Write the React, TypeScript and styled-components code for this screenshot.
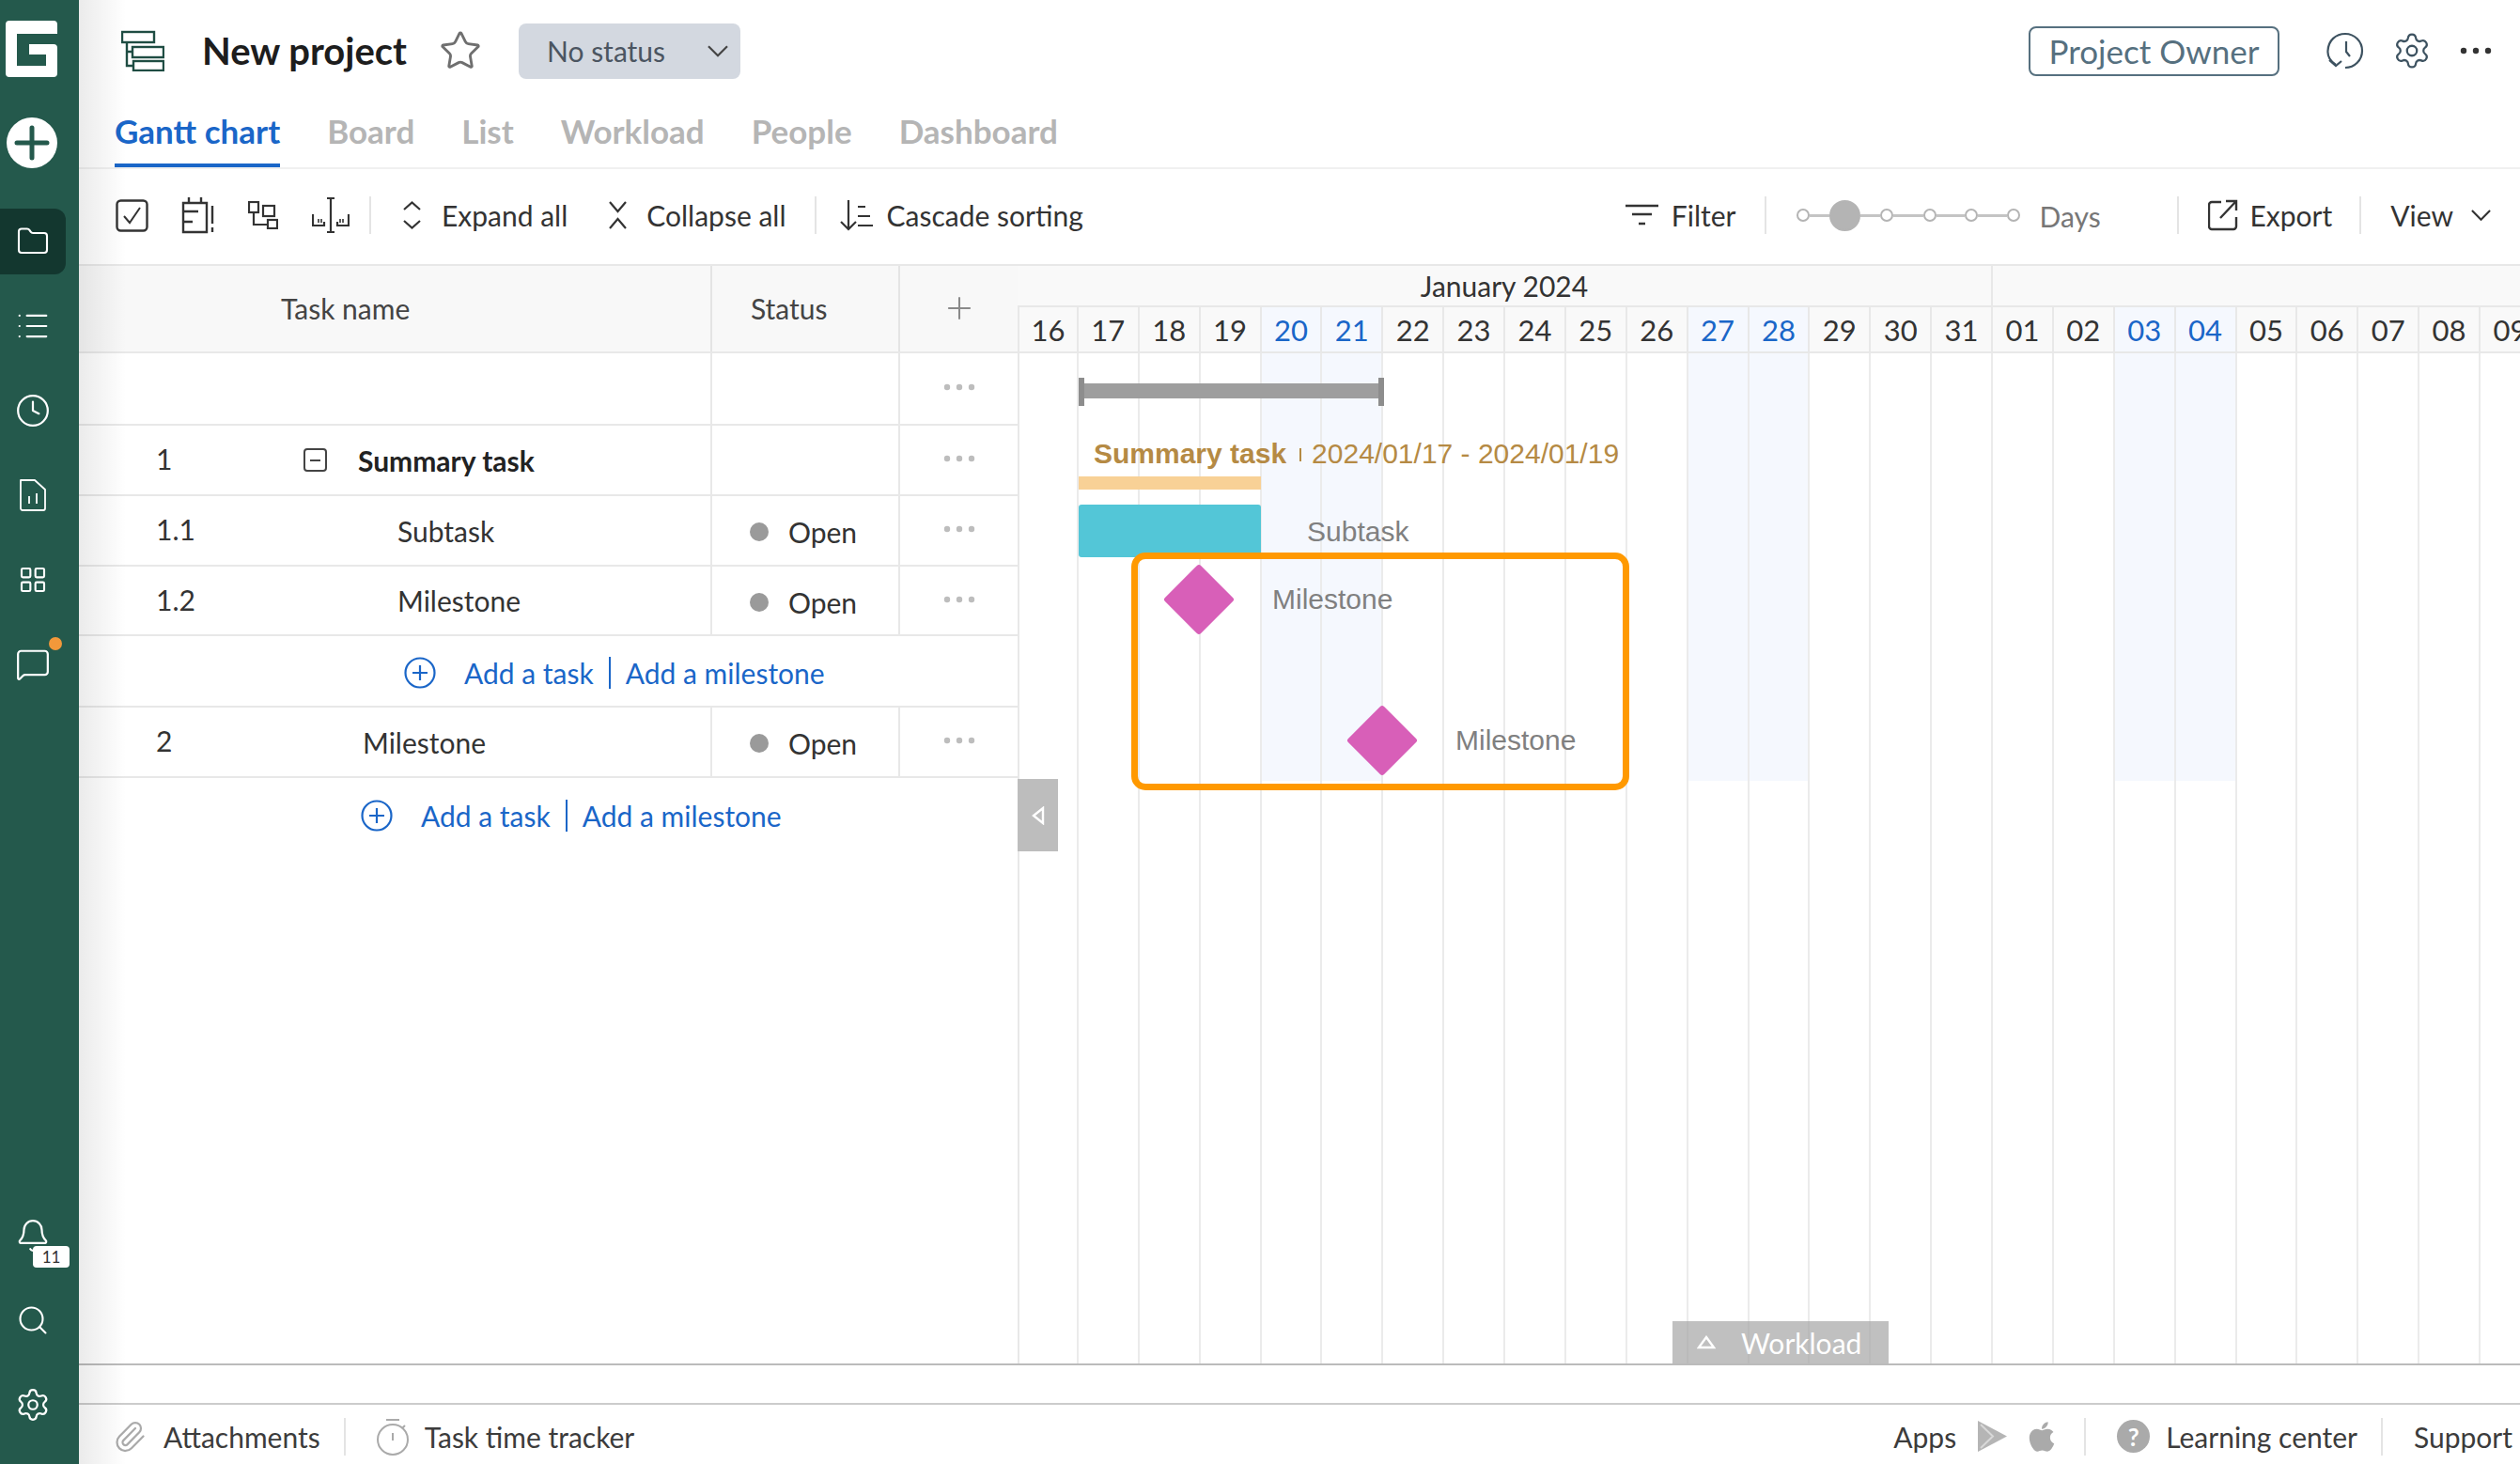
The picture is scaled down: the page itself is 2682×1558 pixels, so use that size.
import React from 'react'
import styled, { createGlobalStyle } from 'styled-components'
import { Bell, Clock, Folder, LayoutGrid, List as ListIcon, MessageSquare, Paperclip, Plus, Search, Settings, Star } from 'lucide-react'
import { FaApple } from 'react-icons/fa'

const Global = createGlobalStyle`
  html, body {
    margin: 0;
    height: 100%;
    overflow: hidden;
    background: #fff;
  }
  body {
    font-family: Lato, "Open Sans", sans-serif;
    color: #333;
  }
`

const Page = styled.div`
  display: flex;
  width: 2682px;
  height: 1558px;
`

const Sidebar = styled.nav`
  flex: 0 0 84px;
  display: flex;
  flex-direction: column;
  padding: 22px 14px 18px 0;
  box-sizing: border-box;
  background: #24594c;
  color: #fff;
  position: relative;
  z-index: 6;
`

const Logo = styled.div`
  height: 60px;
  padding-left: 6px;
`

const AddButton = styled.div`
  height: 54px;
  margin-top: 43px;
  padding-left: 7px;
`

const ActiveItem = styled.div`
  height: 70px;
  margin: 43px 0 10px;
  display: flex;
  align-items: center;
  justify-content: center;
  background: #13372f;
  border-radius: 0 12px 12px 0;
`

const NavItem = styled.div`
  height: 90px;
  display: flex;
  align-items: center;
  justify-content: center;
  position: relative;
`

const NavSpacer = styled.div`
  flex: 1;
`

const OrangeDot = styled.span`
  position: absolute;
  left: 52px;
  top: 16px;
  width: 14px;
  height: 14px;
  border-radius: 50%;
  background: #f2983a;
`

const CountBadge = styled.span`
  position: absolute;
  left: 35px;
  top: 56px;
  width: 39px;
  height: 23px;
  border-radius: 4px;
  background: #fff;
  color: #333;
  font-size: 17px;
  line-height: 23px;
  text-align: center;
`

const Main = styled.main`
  flex: 1;
  min-width: 0;
  display: flex;
  flex-direction: column;
  position: relative;

  &::before {
    content: '';
    position: absolute;
    left: 0;
    top: 0;
    bottom: 0;
    width: 50px;
    background: linear-gradient(90deg, rgba(0, 0, 0, 0.08), rgba(0, 0, 0, 0));
    pointer-events: none;
    z-index: 5;
  }
`

const TitleRow = styled.header`
  height: 108px;
  display: flex;
  align-items: center;
  padding: 0 30px 0 45px;
`

const Title = styled.h1`
  margin: 0 0 0 40px;
  font-size: 40px;
  font-weight: 700;
  color: #1d1d1d;
`

const StarWrap = styled.span`
  margin-left: 34px;
  display: flex;
  color: #6f6f6f;
`

const StatusSelect = styled.div`
  margin-left: 39px;
  width: 236px;
  height: 59px;
  box-sizing: border-box;
  padding: 0 12px 0 30px;
  display: flex;
  align-items: center;
  justify-content: space-between;
  border-radius: 8px;
  background: #d3d8e0;
  color: #4b5561;
  font-size: 30px;
`

const OwnerTag = styled.div`
  margin-left: auto;
  width: 267px;
  height: 53px;
  box-sizing: border-box;
  display: flex;
  align-items: center;
  justify-content: center;
  border: 2px solid #56707f;
  border-radius: 8px;
  color: #56707f;
  font-size: 35px;
`

const HeadIcon = styled.span<{ $ml: number }>`
  margin-left: ${(p) => p.$ml}px;
  display: flex;
  color: #3d5260;
`

const Tabs = styled.div`
  height: 72px;
  box-sizing: border-box;
  display: flex;
  gap: 50px;
  padding-left: 38px;
  border-bottom: 2px solid #f0f0f0;
`

const Tab = styled.div<{ $active?: boolean }>`
  height: 100%;
  box-sizing: border-box;
  display: flex;
  align-items: center;
  padding-bottom: 5px;
  font-size: 35px;
  font-weight: 700;
  color: ${(p) => (p.$active ? '#1a66c8' : '#b5b5b5')};
  border-bottom: 4px solid ${(p) => (p.$active ? '#1a66c8' : 'transparent')};
`

const Toolbar = styled.div`
  height: 101px;
  flex: 0 0 101px;
  box-sizing: border-box;
  display: flex;
  align-items: center;
  padding: 0 30px 3px 39px;
  font-size: 30px;
  color: #333;
`

const ToolIcon = styled.span<{ $ml?: number }>`
  margin-left: ${(p) => p.$ml ?? 0}px;
  display: flex;
`

const ToolButton = styled.div<{ $ml?: number; $gap?: number }>`
  margin-left: ${(p) => p.$ml ?? 0}px;
  display: flex;
  align-items: center;
  gap: ${(p) => p.$gap ?? 20}px;
`

const Divider = styled.span<{ $ml?: number; $h?: number }>`
  flex: none;
  margin-left: ${(p) => p.$ml ?? 0}px;
  width: 2px;
  height: ${(p) => p.$h ?? 40}px;
  background: #e4e4e4;
`

const ToolRight = styled.div`
  margin-left: auto;
  display: flex;
  align-items: center;
`

const Zoom = styled.div`
  margin-left: 32px;
  display: flex;
  align-items: center;
`

const ZoomDot = styled.span<{ $active?: boolean }>`
  flex: none;
  box-sizing: border-box;
  width: ${(p) => (p.$active ? 33 : 14)}px;
  height: ${(p) => (p.$active ? 33 : 14)}px;
  border-radius: 50%;
  border: 2px solid #b4b4b4;
  background: ${(p) => (p.$active ? '#b4b4b4' : '#fff')};
`

const ZoomLine = styled.span<{ $w: number }>`
  flex: none;
  width: ${(p) => p.$w}px;
  height: 3px;
  background: #c4c4c4;
`

const ZoomLabel = styled.span`
  margin: 2px 0 0 20px;
  width: 85px;
  color: #777;
`

const Content = styled.div`
  flex: 1;
  min-height: 0;
  display: flex;
`

const TablePane = styled.section`
  flex: 0 0 999px;
`

const TableHead = styled.div`
  height: 95px;
  box-sizing: border-box;
  display: grid;
  grid-template-columns: 674px 200px 125px;
  border-top: 2px solid #e8e8e8;
  border-bottom: 2px solid #e8e8e8;
  background: #f8f8f8;
  font-size: 30px;
`

const HeadCell = styled.div<{ $pl?: number; $last?: boolean }>`
  display: flex;
  align-items: center;
  padding: 0 0 2px ${(p) => p.$pl ?? 0}px;
  border-right: ${(p) => (p.$last ? 'none' : '2px solid #e4e4e4')};
  justify-content: ${(p) => (p.$last ? 'center' : 'flex-start')};
  color: #444;
`

const Row = styled.div<{ $h: number }>`
  height: ${(p) => p.$h}px;
  box-sizing: border-box;
  display: grid;
  grid-template-columns: 674px 200px 125px;
  border-bottom: 2px solid #e8e8e8;
  font-size: 30px;
  color: #333;
`

const NameCell = styled.div`
  display: flex;
  align-items: center;
  padding-left: 82px;
  border-right: 2px solid #e8e8e8;
`

const Num = styled.span`
  flex: 0 0 157px;
  margin-top: -3px;
`

const TaskName = styled.span<{ $ml?: number; $bold?: boolean }>`
  margin-left: ${(p) => p.$ml ?? 0}px;
  font-weight: ${(p) => (p.$bold ? 700 : 400)};
  color: ${(p) => (p.$bold ? '#222' : '#333')};
`

const ToggleBox = styled.span`
  flex: none;
  width: 25px;
  height: 25px;
  box-sizing: border-box;
  margin-right: 33px;
  border: 2px solid #444;
  border-radius: 4px;
  display: flex;
  align-items: center;
  justify-content: center;

  &::after {
    content: '';
    width: 11px;
    height: 2px;
    background: #444;
  }
`

const StatusCell = styled.div`
  display: flex;
  align-items: center;
  gap: 21px;
  padding: 3px 0 0 40px;
  border-right: 2px solid #e8e8e8;
`

const StatusDot = styled.span`
  width: 20px;
  height: 20px;
  border-radius: 50%;
  background: #9a9a9a;
`

const MenuCell = styled.div`
  display: flex;
  align-items: center;
  justify-content: center;
  padding-bottom: 3px;
  color: #bdbdbd;
`

const AddRow = styled.div<{ $h: number; $pl: number; $pt?: number; $border?: boolean }>`
  height: ${(p) => p.$h}px;
  box-sizing: border-box;
  display: flex;
  align-items: center;
  padding: ${(p) => p.$pt ?? 0}px 0 0 ${(p) => p.$pl}px;
  border-bottom: ${(p) => (p.$border ? '2px solid #e8e8e8' : 'none')};
  font-size: 30px;
  color: #1a66c8;
`

const AddIcon = styled.span`
  display: flex;
  margin-right: 30px;
`

const AddSep = styled.span`
  width: 2px;
  height: 34px;
  margin: 0 16px;
  background: #1a66c8;
`

const GanttPane = styled.section`
  flex: 1;
  min-width: 0;
  display: flex;
  flex-direction: column;
  border-left: 0;
  overflow: hidden;
`

const MonthRow = styled.div`
  height: 46px;
  flex: none;
  box-sizing: border-box;
  display: flex;
  border-top: 2px solid #e8e8e8;
  border-bottom: 2px solid #e8e8e8;
  background: #f9f9f9;
  font-size: 30px;
`

const MonthCell = styled.div<{ $days: number }>`
  flex: 0 0 ${(p) => p.$days * 64.875}px;
  box-sizing: border-box;
  display: flex;
  align-items: center;
  justify-content: center;
  border-right: 2px solid #e8e8e8;
  color: #333;
`

const DayRow = styled.div`
  height: 49px;
  flex: none;
  box-sizing: border-box;
  display: flex;
  border-bottom: 2px solid #e8e8e8;
  background: #f9f9f9;
`

const DayCell = styled.div<{ $weekend?: boolean }>`
  flex: 0 0 64.875px;
  box-sizing: border-box;
  display: flex;
  align-items: center;
  justify-content: center;
  border-right: 2px solid #e8e8e8;
  font-size: 31px;
  color: ${(p) => (p.$weekend ? '#1a66c8' : '#333')};
  background: ${(p) => (p.$weekend ? '#f5f8fe' : 'transparent')};

  &:first-child {
    border-left: 2px solid #e8e8e8;
  }
`

const Canvas = styled.div`
  flex: 1;
  min-height: 0;
  display: flex;
  position: relative;
  border-left: 2px solid #e8e8e8;
  margin-right: -30px;
`

const Column = styled.div<{ $weekend?: boolean }>`
  flex: 0 0 64.875px;
  box-sizing: border-box;
  border-right: 2px solid #ebebeb;
  position: relative;
  margin-left: 0;

  &:first-child {
    flex-basis: 62.875px;
  }

  &::before {
    content: '';
    display: ${(p) => (p.$weekend ? 'block' : 'none')};
    position: absolute;
    left: 0;
    right: 0;
    top: 0;
    height: 455px;
    background: #f5f8fe;
  }
`

const SummaryRange = styled.div`
  position: absolute;
  left: 63px;
  top: 32px;
  width: 325px;
  height: 15.5px;
  background: #9e9e9e;

  &::before,
  &::after {
    content: '';
    position: absolute;
    top: -6px;
    width: 6px;
    height: 30px;
    background: #8d8d8d;
  }
  &::before {
    left: 0;
  }
  &::after {
    right: 0;
  }
`

const SummaryLabel = styled.div`
  position: absolute;
  left: 79px;
  top: 89px;
  display: flex;
  align-items: center;
  font-family: "Liberation Sans", Arial, sans-serif;
  font-size: 30px;
  line-height: 36px;
  color: #b58a44;
  white-space: nowrap;
`

const SummaryName = styled.b`
  font-weight: 700;
`

const SummaryTick = styled.i`
  width: 2px;
  height: 14px;
  margin: 2px 11px 0 14px;
  background: #b58a44;
`

const ProgressBar = styled.div<{ $top: number; $h: number; $color: string; $radius?: number }>`
  position: absolute;
  left: 63px;
  top: ${(p) => p.$top}px;
  width: 194px;
  height: ${(p) => p.$h}px;
  background: ${(p) => p.$color};
  border-radius: ${(p) => p.$radius ?? 0}px;
`

const BarLabel = styled.div<{ $x: number; $y: number }>`
  position: absolute;
  left: ${(p) => p.$x}px;
  top: ${(p) => p.$y}px;
  font-family: "Liberation Sans", Arial, sans-serif;
  font-size: 30px;
  line-height: 36px;
  color: #808080;
  white-space: nowrap;
`

const Diamond = styled.div<{ $x: number; $y: number }>`
  position: absolute;
  left: ${(p) => p.$x - 27}px;
  top: ${(p) => p.$y - 27}px;
  width: 54px;
  height: 54px;
  border-radius: 3px;
  background: #d85fb8;
  transform: rotate(45deg);
`

const Highlight = styled.div`
  position: absolute;
  left: 119px;
  top: 212px;
  width: 530px;
  height: 253px;
  box-sizing: border-box;
  border: 7px solid #ff9900;
  border-radius: 15px;
`

const CollapseHandle = styled.div`
  position: absolute;
  left: -2px;
  top: 453px;
  width: 43px;
  height: 77px;
  display: flex;
  align-items: center;
  justify-content: center;
  background: #bdbdbd;
`

const WorkloadTab = styled.div`
  position: absolute;
  left: 695px;
  bottom: -1px;
  width: 230px;
  height: 46px;
  display: flex;
  align-items: center;
  gap: 27px;
  padding-left: 26px;
  box-sizing: border-box;
  background: rgba(165, 165, 165, 0.7);
  color: #fff;
  font-size: 30px;
`

const BottomStrip = styled.div`
  flex: 0 0 44px;
  box-sizing: border-box;
  border-top: 2px solid #bbb;
  border-bottom: 2px solid #ccc;
`

const Footer = styled.footer`
  flex: 0 0 63px;
  box-sizing: border-box;
  display: flex;
  align-items: center;
  padding: 4px 8px 0 36px;
  font-size: 30px;
  color: #3c3c3c;
`

const FootItem = styled.div<{ $ml?: number; $gap?: number }>`
  margin-left: ${(p) => p.$ml ?? 0}px;
  display: flex;
  align-items: center;
  gap: ${(p) => p.$gap ?? 18}px;
  color: #3c3c3c;
`

const FootRight = styled.div`
  margin-left: auto;
  display: flex;
  align-items: center;
`

const HelpDot = styled.span`
  width: 35px;
  height: 35px;
  border-radius: 50%;
  display: flex;
  align-items: center;
  justify-content: center;
  background: #aaa;
  color: #fff;
  font-size: 26px;
  font-weight: 700;
`

const Gray = styled.span<{ $ml?: number }>`
  margin-left: ${(p) => p.$ml ?? 0}px;
  display: flex;
  color: #aaa;
`

const LogoMark = () => (
  <svg width="55" height="60" viewBox="0 0 55 60">
    <path
      fill="#fff"
      d="M4 0H51a4 4 0 0 1 4 4V14H12V48H43V36H25V25H51a4 4 0 0 1 4 4V56a4 4 0 0 1-4 4H4a4 4 0 0 1-4-4V4a4 4 0 0 1 4-4Z"
    />
  </svg>
)

const PlusDisc = () => (
  <svg width="54" height="54" viewBox="0 0 54 54">
    <circle cx="27" cy="27" r="27" fill="#fff" />
    <path d="M27 11V43M11 27H43" stroke="#24594c" strokeWidth="5" strokeLinecap="round" />
  </svg>
)

const ReportIcon = () => (
  <svg width="30" height="36" viewBox="0 0 30 36" fill="none" stroke="#fff" strokeWidth="1.8" strokeLinejoin="round">
    <path d="M2 2H17L28 12V32a2 2 0 0 1-2 2H4a2 2 0 0 1-2-2Z" />
    <path d="M11 19V27M19 16V27" />
  </svg>
)

const ProjectIcon = () => (
  <svg width="46" height="44" viewBox="0 0 46 44" fill="none" stroke="#1f4d43" strokeWidth="2.4">
    <rect x="1" y="2" width="34" height="11" />
    <rect x="12" y="18" width="33" height="11" />
    <rect x="13" y="33" width="32" height="10" />
    <path d="M6 13V38H13M6 23H12" />
  </svg>
)

const Chevron = ({ size = 24, color = '#444' }: { size?: number; color?: string }) => (
  <svg width={size} height={size * 0.6} viewBox="0 0 24 14" fill="none" stroke={color} strokeWidth="2.2">
    <path d="M2 2L12 12L22 2" />
  </svg>
)

const Dots = ({ color = '#333' }: { color?: string }) => (
  <svg width="34" height="8" viewBox="0 0 34 8" fill={color}>
    <circle cx="4" cy="4" r="3.2" />
    <circle cx="17" cy="4" r="3.2" />
    <circle cx="30" cy="4" r="3.2" />
  </svg>
)

const HistoryIcon = () => (
  <svg width="40" height="40" viewBox="0 0 40 40" fill="none" stroke="#3d5260" strokeWidth="2.2">
    <path d="M10 35C4 31 1 26 1.500 20C2 9 10 2 20 2s18 8 18 18-8 18-18 18" />
    <path d="M3 30L10 36L16 31" />
    <path d="M21 10V21L25 26" />
  </svg>
)

const CheckIcon = () => (
  <svg width="35" height="35" viewBox="0 0 35 35" fill="none" stroke="#333" strokeWidth="2.4">
    <rect x="1.500" y="1.500" width="32" height="32" rx="4" />
    <path d="M9 18L15 25L26 9" strokeWidth="2" />
  </svg>
)

const CalendarAlert = () => (
  <svg width="36" height="40" viewBox="0 0 36 40" fill="none" stroke="#333" strokeWidth="2.4">
    <path d="M2 7H27V38H2Z" />
    <path d="M8 1V7M21 1V7M2 16H18M2 27H12" />
    <path d="M33 10V29M33 33V38" />
  </svg>
)

const LinkIcon = () => (
  <svg width="32" height="30" viewBox="0 0 32 30" fill="none" stroke="#333" strokeWidth="2.2">
    <rect x="1" y="1" width="10" height="11" />
    <rect x="16" y="5" width="12" height="11" />
    <rect x="21" y="20" width="10" height="9" />
    <path d="M6 12V25H21" />
  </svg>
)

const SplitIcon = () => (
  <svg width="40" height="40" viewBox="0 0 40 40" fill="none" stroke="#333" strokeWidth="2.2">
    <path d="M20 1V39M16 2H24M16 38H24" />
    <path d="M1 19V31H13V27M39 19V31H27V27" />
    <path d="M7 24V28M10 24V28M30 24V28M33 24V28" strokeWidth="1.600" />
  </svg>
)

const ExpandIcon = () => (
  <svg width="21" height="30" viewBox="0 0 21 30" fill="none" stroke="#333" strokeWidth="2.2">
    <path d="M2 9L10.500 1.500L19 9M2 21L10.500 28.500L19 21" />
  </svg>
)

const CollapseIcon = () => (
  <svg width="21" height="30" viewBox="0 0 21 30" fill="none" stroke="#333" strokeWidth="2.2">
    <path d="M2 1L10.500 11L19 1M2 29L10.500 19L19 29" />
  </svg>
)

const CascadeIcon = () => (
  <svg width="37" height="34" viewBox="0 0 37 34" fill="none" stroke="#333" strokeWidth="2.200">
    <path d="M10 1V32M2 24L10 32L18 24" />
    <path d="M20 8H28M20 18H33M20 28H36" />
  </svg>
)

const FilterIcon = () => (
  <svg width="35" height="24" viewBox="0 0 35 24" fill="none" stroke="#333" strokeWidth="2.600">
    <path d="M0 2H35M7 11H28M14 21H21" />
  </svg>
)

const ExportIcon = () => (
  <svg width="32" height="34" viewBox="0 0 32 34" fill="none" stroke="#333" strokeWidth="2.400">
    <path d="M14 3H4a3 3 0 0 0-3 3V29a3 3 0 0 0 3 3H27a3 3 0 0 0 3-3V19" />
    <path d="M13 20L30 2M19 2H30V12" />
  </svg>
)

const CirclePlus = () => (
  <svg width="34" height="34" viewBox="0 0 34 34" fill="none" stroke="#1a66c8" strokeWidth="2.200">
    <circle cx="17" cy="17" r="15.500" />
    <path d="M17 9V25M9 17H25" />
  </svg>
)

const LeftTriangle = () => (
  <svg width="14" height="20" viewBox="0 0 14 20" fill="none" stroke="#fff" strokeWidth="2.400">
    <path d="M12 2V18L2 10Z" />
  </svg>
)

const UpTriangle = () => (
  <svg width="20" height="16" viewBox="0 0 20 16" fill="none" stroke="#fff" strokeWidth="2.400">
    <path d="M10 2L18 13H2Z" />
  </svg>
)

const TimerIcon = () => (
  <svg width="36" height="40" viewBox="0 0 36 40" fill="none" stroke="#aaa" strokeWidth="2">
    <circle cx="18" cy="23" r="16" />
    <path d="M18 16V24M11 2H25M31 8L28 11" />
  </svg>
)

const PlayIcon = () => (
  <svg width="31" height="33" viewBox="0 0 31 33">
    <path d="M0 0L31 16.500L0 33Z" fill="#b5b5b5" />
    <path d="M3 4L16 16.500L3 29" fill="none" stroke="#d8d8d8" strokeWidth="2" />
  </svg>
)

const days = [
  '16', '17', '18', '19', '20', '21', '22', '23', '24', '25', '26', '27', '28',
  '29', '30', '31', '01', '02', '03', '04', '05', '06', '07', '08', '09',
]
const weekends = ['20', '21', '27', '28', '03', '04']

const tabs = ['Gantt chart', 'Board', 'List', 'Workload', 'People', 'Dashboard']

export default function App() {
  return (
    <Page>
      <Global />
      <Sidebar>
        <Logo>
          <LogoMark />
        </Logo>
        <AddButton>
          <PlusDisc />
        </AddButton>
        <ActiveItem>
          <Folder size={36} strokeWidth={1.4} />
        </ActiveItem>
        <NavItem>
          <ListIcon size={38} strokeWidth={1.4} />
        </NavItem>
        <NavItem>
          <Clock size={38} strokeWidth={1.4} />
        </NavItem>
        <NavItem>
          <ReportIcon />
        </NavItem>
        <NavItem>
          <LayoutGrid size={32} strokeWidth={1.6} />
        </NavItem>
        <NavItem>
          <MessageSquare size={38} strokeWidth={1.4} />
          <OrangeDot />
        </NavItem>
        <NavSpacer />
        <NavItem>
          <Bell size={38} strokeWidth={1.4} />
          <CountBadge>11</CountBadge>
        </NavItem>
        <NavItem>
          <Search size={36} strokeWidth={1.4} />
        </NavItem>
        <NavItem>
          <Settings size={38} strokeWidth={1.4} />
        </NavItem>
      </Sidebar>

      <Main>
        <TitleRow>
          <ProjectIcon />
          <Title>New project</Title>
          <StarWrap>
            <Star size={46} strokeWidth={1.5} />
          </StarWrap>
          <StatusSelect>
            No status
            <Chevron />
          </StatusSelect>
          <OwnerTag>Project Owner</OwnerTag>
          <HeadIcon $ml={50}>
            <HistoryIcon />
          </HeadIcon>
          <HeadIcon $ml={30}>
            <Settings size={42} strokeWidth={1.300} />
          </HeadIcon>
          <HeadIcon $ml={30}>
            <Dots />
          </HeadIcon>
        </TitleRow>

        <Tabs>
          {tabs.map((tab, i) => (
            <Tab key={tab} $active={i === 0}>
              {tab}
            </Tab>
          ))}
        </Tabs>

        <Toolbar>
          <ToolIcon>
            <CheckIcon />
          </ToolIcon>
          <ToolIcon $ml={35}>
            <CalendarAlert />
          </ToolIcon>
          <ToolIcon $ml={35}>
            <LinkIcon />
          </ToolIcon>
          <ToolIcon $ml={36}>
            <SplitIcon />
          </ToolIcon>
          <Divider $ml={21} />
          <ToolButton $ml={33} $gap={21}>
            <ExpandIcon />
            Expand all
          </ToolButton>
          <ToolButton $ml={43}>
            <CollapseIcon />
            Collapse all
          </ToolButton>
          <Divider $ml={30} />
          <ToolButton $ml={24} $gap={14}>
            <CascadeIcon />
            Cascade sorting
          </ToolButton>
          <ToolRight>
            <ToolButton $gap={14}>
              <FilterIcon />
              Filter
            </ToolButton>
            <Divider $ml={31} />
            <Zoom>
              <ZoomDot />
              <ZoomLine $w={21} />
              <ZoomDot $active />
              <ZoomLine $w={21} />
              <ZoomDot />
              <ZoomLine $w={32} />
              <ZoomDot />
              <ZoomLine $w={30} />
              <ZoomDot />
              <ZoomLine $w={31} />
              <ZoomDot />
            </Zoom>
            <ZoomLabel>Days</ZoomLabel>
            <Divider $ml={62} />
            <ToolButton $ml={31} $gap={12}>
              <ExportIcon />
              Export
            </ToolButton>
            <Divider $ml={29} />
            <ToolButton $ml={31} $gap={18}>
              View
              <Chevron size={23} color="#333" />
            </ToolButton>
          </ToolRight>
        </Toolbar>

        <Content>
          <TablePane>
            <TableHead>
              <HeadCell $pl={215}>Task name</HeadCell>
              <HeadCell $pl={41}>Status</HeadCell>
              <HeadCell $last>
                <Plus size={38} strokeWidth={1.300} color="#8a8a8a" />
              </HeadCell>
            </TableHead>
            <Row $h={77}>
              <NameCell />
              <StatusCell />
              <MenuCell>
                <Dots color="#bdbdbd" />
              </MenuCell>
            </Row>
            <Row $h={75}>
              <NameCell>
                <Num>1</Num>
                <ToggleBox />
                <TaskName $bold>Summary task</TaskName>
              </NameCell>
              <StatusCell />
              <MenuCell>
                <Dots color="#bdbdbd" />
              </MenuCell>
            </Row>
            <Row $h={75}>
              <NameCell>
                <Num>1.1</Num>
                <TaskName $ml={100}>Subtask</TaskName>
              </NameCell>
              <StatusCell>
                <StatusDot />
                Open
              </StatusCell>
              <MenuCell>
                <Dots color="#bdbdbd" />
              </MenuCell>
            </Row>
            <Row $h={74}>
              <NameCell>
                <Num>1.2</Num>
                <TaskName $ml={100}>Milestone</TaskName>
              </NameCell>
              <StatusCell>
                <StatusDot />
                Open
              </StatusCell>
              <MenuCell>
                <Dots color="#bdbdbd" />
              </MenuCell>
            </Row>
            <AddRow $h={76} $pl={346} $pt={4} $border>
              <AddIcon>
                <CirclePlus />
              </AddIcon>
              Add a task
              <AddSep />
              Add a milestone
            </AddRow>
            <Row $h={75}>
              <NameCell>
                <Num>2</Num>
                <TaskName $ml={63}>Milestone</TaskName>
              </NameCell>
              <StatusCell>
                <StatusDot />
                Open
              </StatusCell>
              <MenuCell>
                <Dots color="#bdbdbd" />
              </MenuCell>
            </Row>
            <AddRow $h={80} $pl={300}>
              <AddIcon>
                <CirclePlus />
              </AddIcon>
              Add a task
              <AddSep />
              Add a milestone
            </AddRow>
          </TablePane>

          <GanttPane>
            <MonthRow>
              <MonthCell $days={16}>January 2024</MonthCell>
            </MonthRow>
            <DayRow>
              {days.map((d) => (
                <DayCell key={d} $weekend={weekends.includes(d)}>
                  {d}
                </DayCell>
              ))}
            </DayRow>
            <Canvas>
              {days.map((d) => (
                <Column key={d} $weekend={weekends.includes(d)} />
              ))}
              <SummaryRange />
              <SummaryLabel>
                <SummaryName>Summary task</SummaryName>
                <SummaryTick />
                2024/01/17 - 2024/01/19
              </SummaryLabel>
              <ProgressBar $top={131} $h={14} $color="#f8d196" />
              <ProgressBar $top={161} $h={56} $color="#53c6d7" $radius={3} />
              <BarLabel $x={306} $y={172}>Subtask</BarLabel>
              <Diamond $x={191} $y={262} />
              <BarLabel $x={269} $y={244}>Milestone</BarLabel>
              <Diamond $x={386} $y={412} />
              <BarLabel $x={464} $y={394}>Milestone</BarLabel>
              <Highlight />
              <CollapseHandle>
                <LeftTriangle />
              </CollapseHandle>
              <WorkloadTab>
                <UpTriangle />
                Workload
              </WorkloadTab>
            </Canvas>
          </GanttPane>
        </Content>

        <BottomStrip />

        <Footer>
          <FootItem $gap={18}>
            <Gray>
              <Paperclip size={36} strokeWidth={1.500} />
            </Gray>
            Attachments
          </FootItem>
          <Divider $ml={25} />
          <FootItem $ml={32} $gap={16}>
            <TimerIcon />
            Task time tracker
          </FootItem>
          <FootRight>
            <FootItem $gap={23}>
              Apps
              <PlayIcon />
            </FootItem>
            <Gray $ml={19}>
              <FaApple size={36} />
            </Gray>
            <Divider $ml={27} />
            <FootItem $ml={33} $gap={17}>
              <HelpDot>?</HelpDot>
              Learning center
            </FootItem>
            <Divider $ml={25} />
            <FootItem $ml={33}>Support</FootItem>
          </FootRight>
        </Footer>
      </Main>
    </Page>
  )
}
